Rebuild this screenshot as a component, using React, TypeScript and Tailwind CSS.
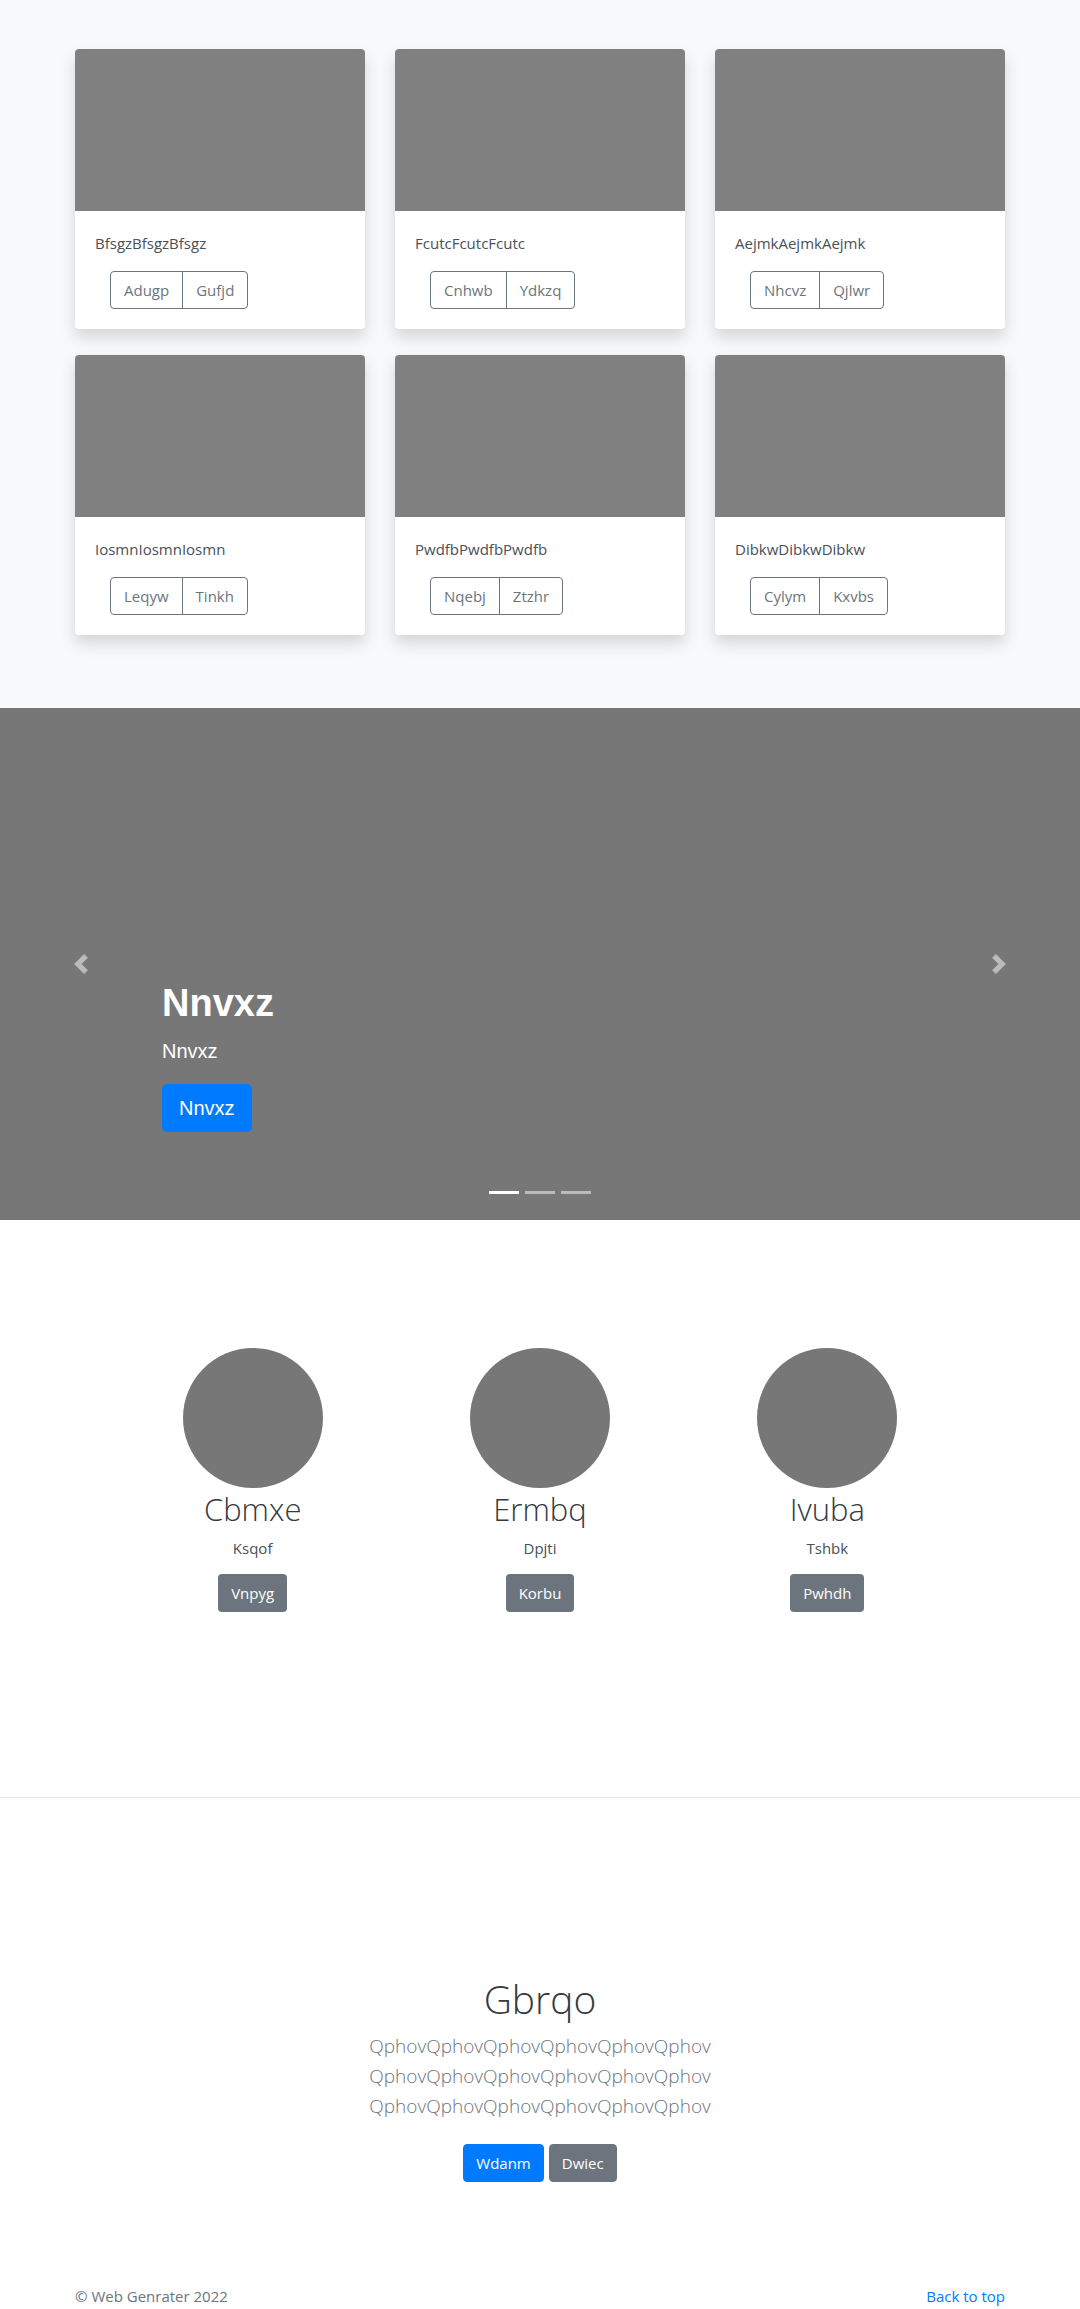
const cards = [
  { title: 'BfsgzBfsgzBfsgz', actions: ['Adugp', 'Gufjd'] },
  { title: 'FcutcFcutcFcutc', actions: ['Cnhwb', 'Ydkzq'] },
  { title: 'AejmkAejmkAejmk', actions: ['Nhcvz', 'Qjlwr'] },
  { title: 'IosmnIosmnIosmn', actions: ['Leqyw', 'Tinkh'] },
  { title: 'PwdfbPwdfbPwdfb', actions: ['Nqebj', 'Ztzhr'] },
  { title: 'DibkwDibkwDibkw', actions: ['Cylym', 'Kxvbs'] },
];

const people = [
  { name: 'Cbmxe', role: 'Ksqof', action: 'Vnpyg' },
  { name: 'Ermbq', role: 'Dpjti', action: 'Korbu' },
  { name: 'Ivuba', role: 'Tshbk', action: 'Pwhdh' },
];

const lines = [
  'QphovQphovQphovQphovQphovQphov',
  'QphovQphovQphovQphovQphovQphov',
  'QphovQphovQphovQphovQphovQphov',
];

function Chevron({ dir }: { dir: 'left' | 'right' }) {
  return (
    <svg viewBox="0 0 8 8" className="w-5 h-5" fill="#fff" opacity={0.5}>
      {dir === 'left' ? (
        <path d="M5.25 0l-4 4 4 4 1.5-1.5L4.25 4l2.5-2.5L5.25 0z" />
      ) : (
        <path d="M2.75 0l-1.5 1.5L3.75 4l-2.5 2.5L2.75 8l4-4-4-4z" />
      )}
    </svg>
  );
}

export default function App() {
  return (
    <div className="min-h-screen bg-white text-[#212529] font-['Open_Sans',sans-serif]">
      {/* Album cards */}
      <section className="bg-[#f8f9fa] pt-[49px] pb-[73px]">
        <div className="w-[930px] mx-auto grid grid-cols-3 gap-x-[30px] gap-y-[26px]">
          {cards.map((card, i) => (
            <div key={i} className="bg-white rounded-[4px] overflow-hidden shadow-[0_8px_16px_rgba(0,0,0,0.15)]">
              <div className="h-[162px] bg-[#808080]" />
              <div className="p-5">
                <p className="text-[15px] leading-6 text-[#495057] mb-4">{card.title}</p>
                <div className="flex ml-[15px]">
                  <button className="h-[38px] px-[13px] text-[15px] text-[#6c757d] border border-[#6c757d] rounded-l-[4px]">
                    {card.actions[0]}
                  </button>
                  <button className="h-[38px] px-[13px] text-[15px] text-[#6c757d] border border-[#6c757d] -ml-px rounded-r-[4px]">
                    {card.actions[1]}
                  </button>
                </div>
              </div>
            </div>
          ))}
        </div>
      </section>

      {/* Carousel */}
      <section className="relative h-[512px] bg-[#777]">
        <div className="absolute left-0 top-0 bottom-0 w-[15%] flex items-center justify-center">
          <Chevron dir="left" />
        </div>
        <div className="absolute right-0 top-0 bottom-0 w-[15%] flex items-center justify-center">
          <Chevron dir="right" />
        </div>
        <div className="absolute left-[15%] right-[15%] bottom-[88px] text-white font-['Liberation_Sans',sans-serif]">
          <h1 className="text-[38px] leading-[46px] font-bold mb-[10px]">Nnvxz</h1>
          <p className="text-xl leading-[30px] mb-[18px]">Nnvxz</p>
          <a className="inline-block h-12 leading-[46px] px-4 text-xl bg-[#007bff] border border-[#007bff] rounded-[5px]">
            Nnvxz
          </a>
        </div>
        <div className="absolute bottom-[26px] left-0 right-0 flex justify-center gap-[6px]">
          <span className="w-[30px] h-[3px] bg-white" />
          <span className="w-[30px] h-[3px] bg-white/50" />
          <span className="w-[30px] h-[3px] bg-white/50" />
        </div>
      </section>

      {/* Marketing */}
      <section className="pt-[128px] pb-[185px]">
        <div className="w-[862px] mx-auto grid grid-cols-3">
          {people.map((p, i) => (
            <div key={i} className="flex flex-col items-center text-center">
              <div className="w-[140px] h-[140px] rounded-full bg-[#777]" />
              <h2 className="text-[31px] leading-[38px] mt-[2px] font-light text-[#343a40]">{p.name}</h2>
              <p className="text-[15px] leading-6 mt-2 text-[#495057]">{p.role}</p>
              <button className="mt-[14px] h-[38px] px-[13px] text-[15px] text-white bg-[#6c757d] rounded-[4px]">
                {p.action}
              </button>
            </div>
          ))}
        </div>
      </section>

      <hr className="border-0 border-t border-[#e6e6e6]" />

      {/* Jumbotron */}
      <section className="pt-[177px] pb-[102px] text-center">
        <h1 className="text-[39px] leading-[48px] font-light text-[#343a40] mb-[8px]">Gbrqo</h1>
        <p className="text-[19px] leading-[30px] font-light text-[#6c757d]">
          {lines.map((l, i) => (
            <span key={i} className="block">{l}</span>
          ))}
        </p>
        <div className="mt-[23px] flex justify-center gap-[5px]">
          <a className="inline-block h-[38px] leading-[36px] px-3 text-[15px] text-white bg-[#007bff] border border-[#007bff] rounded-[4px]">
            Wdanm
          </a>
          <a className="inline-block h-[38px] leading-[36px] px-3 text-[15px] text-white bg-[#6c757d] border border-[#6c757d] rounded-[4px]">
            Dwiec
          </a>
        </div>
      </section>

      {/* Footer */}
      <footer className="pb-12">
        <div className="w-[930px] mx-auto flex justify-between text-[15px] leading-6">
          <p className="text-[#6c757d]">© Web Genrater 2022</p>
          <a className="text-[#007bff]">Back to top</a>
        </div>
      </footer>
    </div>
  );
}
